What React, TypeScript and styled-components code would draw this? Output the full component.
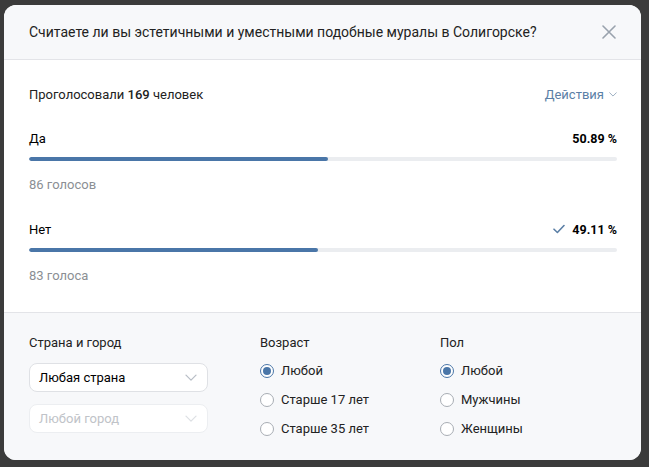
import React from 'react';
import styled, { createGlobalStyle } from 'styled-components';

const GlobalStyle = createGlobalStyle`
  html, body {
    margin: 0;
    padding: 0;
    background: #3b3b3b;
    font-family: Roboto, "Noto Sans", Arial, sans-serif;
    -webkit-font-smoothing: antialiased;
  }
`;

const Page = styled.div`
  width: 649px;
  height: 467px;
  padding: 5px 8px 7px 4px;
  box-sizing: border-box;
`;

const Modal = styled.div`
  width: 637px;
  height: 455px;
  background: #ffffff;
  border-radius: 12px;
  overflow: hidden;
  display: flex;
  flex-direction: column;
`;

const Header = styled.div`
  height: 54px;
  background: #f7f8fa;
  border-bottom: 1px solid #e3e4e8;
  display: flex;
  align-items: center;
  justify-content: space-between;
  padding: 0 24px 0 25px;
  flex-shrink: 0;
`;

const Title = styled.div`
  font-size: 14px;
  color: #222222;
`;

const CloseButton = styled.button`
  border: none;
  background: none;
  padding: 0;
  width: 16px;
  height: 16px;
  display: flex;
  align-items: center;
  justify-content: center;
  cursor: pointer;
`;

const Body = styled.div`
  flex: 1;
  padding: 27px 24px 0 25px;
`;

const SummaryRow = styled.div`
  display: flex;
  justify-content: space-between;
  align-items: center;
  font-size: 13px;
  color: #222222;
  margin-bottom: 27px;

  b {
    font-weight: 500;
  }
`;

const Actions = styled.div`
  display: flex;
  align-items: center;
  gap: 5px;
  color: #5b7fa6;
`;

const Answer = styled.div`
  margin-bottom: 28px;
`;

const AnswerHead = styled.div`
  display: flex;
  justify-content: space-between;
  align-items: center;
  font-size: 13px;
  color: #000000;
  height: 18px;
`;

const Percent = styled.div`
  display: flex;
  align-items: center;
  gap: 7px;
  font-weight: 700;
  font-size: 12.5px;
`;

const Track = styled.div`
  margin-top: 10px;
  height: 4px;
  border-radius: 2px;
  background: #ebedf0;
  overflow: hidden;
`;

const Fill = styled.div`
  height: 100%;
  background: #4a76a8;
  border-radius: 2px;
`;

const Votes = styled.div`
  margin-top: 16px;
  font-size: 13px;
  color: #8b8f94;
`;

const Footer = styled.div`
  height: 148px;
  background: #f7f8fa;
  border-top: 1px solid #e3e4e8;
  display: grid;
  grid-template-columns: 231px 180px 1fr;
  padding: 22px 24px 0 25px;
  box-sizing: border-box;
`;

const Column = styled.div`
  display: flex;
  flex-direction: column;
`;

const Label = styled.div`
  font-size: 13px;
  color: #222222;
  margin-bottom: 13px;
`;

const Select = styled.div<{ disabled?: boolean }>`
  width: 179px;
  height: 29px;
  box-sizing: border-box;
  border: 1px solid ${p => (p.disabled ? '#eceef1' : '#dfe1e5')};
  border-radius: 8px;
  background: #ffffff;
  display: flex;
  align-items: center;
  justify-content: space-between;
  padding: 0 10px 0 9px;
  font-size: 13px;
  color: ${p => (p.disabled ? '#c0c3c8' : '#000000')};
  margin-bottom: 12px;
`;

const RadioRow = styled.div`
  display: flex;
  align-items: center;
  gap: 7px;
  height: 29px;
  margin-top: -7px;
  margin-bottom: 7px;
  font-size: 13px;
  color: #222222;
`;

const RadioCircle = styled.span<{ checked?: boolean }>`
  width: 14px;
  height: 14px;
  border-radius: 50%;
  box-sizing: border-box;
  border: 1px solid ${p => (p.checked ? '#4a76a8' : '#a8adb4')};
  background: #ffffff;
  display: flex;
  align-items: center;
  justify-content: center;

  &::after {
    content: '';
    width: 8px;
    height: 8px;
    border-radius: 50%;
    background: ${p => (p.checked ? '#4a76a8' : 'transparent')};
  }
`;

const Chevron = ({ color = '#b8bec6', size = 12 }: { color?: string; size?: number }) => (
  <svg width={size} height={size * 0.6} viewBox="0 0 12 7" fill="none">
    <path d="M1 1l5 5 5-5" stroke={color} strokeWidth="1.3" strokeLinecap="round" strokeLinejoin="round" />
  </svg>
);

const answers = [
  { label: 'Да', percent: 50.89, votes: '86 голосов', mine: false },
  { label: 'Нет', percent: 49.11, votes: '83 голоса', mine: true },
];

const Radio = ({ label, checked }: { label: string; checked?: boolean }) => (
  <RadioRow>
    <RadioCircle checked={checked} />
    {label}
  </RadioRow>
);

export default function App() {
  return (
    <Page>
      <GlobalStyle />
      <Modal>
        <Header>
          <Title>Считаете ли вы эстетичными и уместными подобные муралы в Солигорске?</Title>
          <CloseButton>
            <svg width="14" height="14" viewBox="0 0 14 14">
              <path d="M1 1l12 12M13 1L1 13" stroke="#99a2ad" strokeWidth="1.6" strokeLinecap="round" />
            </svg>
          </CloseButton>
        </Header>
        <Body>
          <SummaryRow>
            <span>
              Проголосовали <b>169</b> человек
            </span>
            <Actions>
              Действия
              <Chevron color="#8fa3b8" size={8} />
            </Actions>
          </SummaryRow>
          {answers.map(a => (
            <Answer key={a.label}>
              <AnswerHead>
                <span>{a.label}</span>
                <Percent>
                  {a.mine && (
                    <svg width="12" height="10" viewBox="0 0 12 10">
                      <path d="M1 5.2l3.4 3.3L11 1.5" stroke="#5b7fa6" strokeWidth="1.6" fill="none" strokeLinecap="round" strokeLinejoin="round" />
                    </svg>
                  )}
                  {a.percent.toFixed(2)} %
                </Percent>
              </AnswerHead>
              <Track>
                <Fill style={{ width: `${a.percent}%` }} />
              </Track>
              <Votes>{a.votes}</Votes>
            </Answer>
          ))}
        </Body>
        <Footer>
          <Column>
            <Label>Страна и город</Label>
            <Select>
              Любая страна
              <Chevron />
            </Select>
            <Select disabled>
              Любой город
              <Chevron color="#dde0e4" />
            </Select>
          </Column>
          <Column>
            <Label>Возраст</Label>
            <Radio label="Любой" checked />
            <Radio label="Старше 17 лет" />
            <Radio label="Старше 35 лет" />
          </Column>
          <Column>
            <Label>Пол</Label>
            <Radio label="Любой" checked />
            <Radio label="Мужчины" />
            <Radio label="Женщины" />
          </Column>
        </Footer>
      </Modal>
    </Page>
  );
}
